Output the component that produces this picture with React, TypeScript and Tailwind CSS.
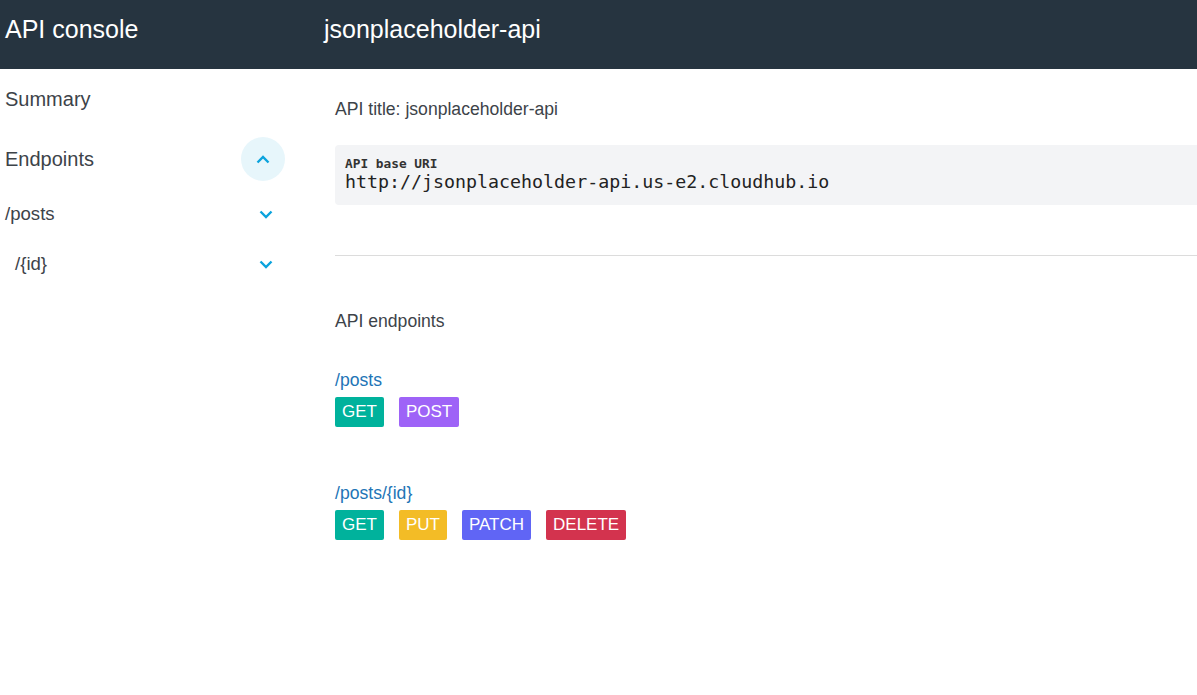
import React from "react";

const Chevron = ({ up }: { up?: boolean }) => (
  <svg width="14" height="9" viewBox="0 0 14 9" className="block">
    <path
      d={up ? "M1.5 7.5 L7 2 L12.5 7.5" : "M1.5 1.5 L7 7 L12.5 1.5"}
      fill="none"
      stroke="#0ba3dd"
      strokeWidth="2.4"
    />
  </svg>
);

const Badge = ({ label, color }: { label: string; color: string }) => (
  <span
    className={`inline-flex items-center h-[30px] px-[7px] text-[17px] text-white rounded-[2px] ${color}`}
  >
    {label}
  </span>
);

export default function App() {
  return (
    <div
      className="w-[1197px] h-[695px] bg-white overflow-hidden"
      style={{ fontFamily: '"Liberation Sans", Arial, sans-serif' }}
    >
      <header className="h-[69px] bg-[#263440] flex items-center text-white">
        <div className="w-[324px] pl-[5px] text-[25px] pb-[10px]">API console</div>
        <div className="text-[25px] pb-[10px]">jsonplaceholder-api</div>
      </header>
      <div className="flex">
        <aside className="w-[300px] shrink-0 text-[#3d4349]">
          <div className="h-[60px] flex items-center pl-[5px] text-[20px] pb-[1px]">Summary</div>
          <div className="h-[60px] flex items-center justify-between pl-[5px] pr-[15px] text-[20px]">
            <span>Endpoints</span>
            <span className="w-[44px] h-[44px] rounded-full bg-[#e7f6fb] flex items-center justify-center">
              <Chevron up />
            </span>
          </div>
          <div className="h-[50px] flex items-center justify-between pl-[5px] pr-[27px] text-[18.6px]">
            <span>/posts</span>
            <Chevron />
          </div>
          <div className="h-[50px] flex items-center justify-between pl-[15px] pr-[27px] text-[18.6px]">
            <span>/{"{id}"}</span>
            <Chevron />
          </div>
        </aside>
        <main className="flex-1 pl-[35px] text-[#3d4349]">
          <div className="pt-[30px] text-[17.6px] leading-[20px]">API title: jsonplaceholder-api</div>
          <div className="mt-[26px] h-[60px] bg-[#f3f4f6] rounded-l-[4px] pl-[10px] flex flex-col justify-center">
            <div className="text-[12.8px] leading-[14px] font-semibold font-['DejaVu_Sans_Mono',monospace] text-[#333]">API base URI</div>
            <div className="text-[18.3px] leading-[22px] font-['DejaVu_Sans_Mono',monospace] text-[#222]">
              http://jsonplaceholder-api.us-e2.cloudhub.io
            </div>
          </div>
          <div className="mt-[50px] h-px bg-[#dcdcdc]" />
          <div className="mt-[55px] text-[17.6px] leading-[20px]">API endpoints</div>
          <div className="mt-[39px]">
            <div className="text-[17.6px] leading-[20px] text-[#2274b6]">/posts</div>
            <div className="mt-[7px] flex gap-[15px]">
              <Badge label="GET" color="bg-[#00b29c]" />
              <Badge label="POST" color="bg-[#9e63f7]" />
            </div>
          </div>
          <div className="mt-[56px]">
            <div className="text-[17.6px] leading-[20px] text-[#2274b6]">/posts/{"{id}"}</div>
            <div className="mt-[7px] flex gap-[15px]">
              <Badge label="GET" color="bg-[#00b29c]" />
              <Badge label="PUT" color="bg-[#f3bc26]" />
              <Badge label="PATCH" color="bg-[#6065f5]" />
              <Badge label="DELETE" color="bg-[#d3334e]" />
            </div>
          </div>
        </main>
      </div>
    </div>
  );
}
